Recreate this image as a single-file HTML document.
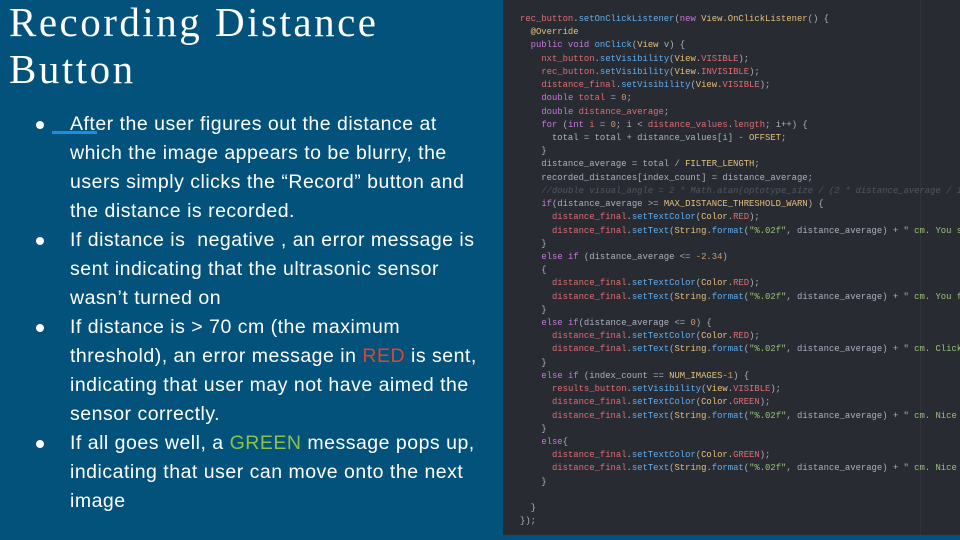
<!DOCTYPE html>
<html><head><meta charset="utf-8"><style>
*{margin:0;padding:0;box-sizing:border-box}
body{width:960px;height:540px;background:#03527b;position:relative;overflow:hidden;font-family:"Liberation Sans",sans-serif;color:#fff}
h1{position:absolute;left:9px;top:-1px;font-family:"Liberation Serif",serif;font-weight:normal;font-size:41px;line-height:47px;letter-spacing:2.5px;width:420px}
ul{position:absolute;left:70px;top:110px;width:416px;list-style:none;font-size:19.5px;line-height:29px;letter-spacing:0.5px}
li{position:relative}
li:before{content:"";position:absolute;left:-34px;top:11px;width:8px;height:8px;border-radius:50%;background:#fff}
.red{color:#e0442c}.green{color:#8bc34a}
.ul{position:absolute;left:52px;top:131px;width:45px;height:3px;background:#1a8fe0}
.code{position:absolute;left:503px;top:0;width:457px;height:535px;background:#282b32}
.vl{position:absolute;left:920px;top:0;width:1px;height:535px;background:#31343b}
pre{position:absolute;left:520px;top:13px;font-family:"Liberation Mono",monospace;font-size:8.9px;line-height:13.22px;color:#abb2bf;white-space:pre}
.r{color:#e06c75}.b{color:#61afef}.k{color:#c678dd}.y{color:#e5c07b}.n{color:#d19a66}.s{color:#98c379}.c{color:#4f5562;font-style:italic}
</style></head><body>
<h1>Recording Distance Button</h1>
<div class="ul"></div>
<ul>
<li>After the user figures out the distance at which the image appears to be blurry, the users simply clicks the “Record” button and the distance is recorded.</li>
<li>If distance is &nbsp;negative , an error message is sent indicating that the ultrasonic sensor wasn’t turned on</li>
<li>If distance is &gt; 70 cm (the maximum threshold), an error message in <span class="red">RED</span> is sent, indicating that user may not have aimed the sensor correctly.</li>
<li>If all goes well, a <span class="green">GREEN</span> message pops up, indicating that user can move onto the next image</li>
</ul>
<div class="code"></div><div class="vl"></div>
<pre><span class="r">rec_button</span>.<span class="b">setOnClickListener</span>(<span class="k">new</span> <span class="y">View</span>.<span class="y">OnClickListener</span>() {
  <span class="y">@Override</span>
  <span class="k">public void</span> <span class="b">onClick</span>(<span class="y">View</span> v) {
    <span class="r">nxt_button</span>.<span class="b">setVisibility</span>(<span class="y">View</span>.<span class="r">VISIBLE</span>);
    <span class="r">rec_button</span>.<span class="b">setVisibility</span>(<span class="y">View</span>.<span class="r">INVISIBLE</span>);
    <span class="r">distance_final</span>.<span class="b">setVisibility</span>(<span class="y">View</span>.<span class="r">VISIBLE</span>);
    <span class="k">double</span> <span class="r">total</span> = <span class="n">0</span>;
    <span class="k">double</span> <span class="r">distance_average</span>;
    <span class="k">for</span> (<span class="k">int</span> <span class="r">i</span> = <span class="n">0</span>; i &lt; <span class="r">distance_values</span>.<span class="r">length</span>; i++) {
      total = total + distance_values[i] - <span class="y">OFFSET</span>;
    }
    distance_average = total / <span class="y">FILTER_LENGTH</span>;
    recorded_distances[index_count] = distance_average;
    <span class="c">//double visual_angle = 2 * Math.atan(optotype_size / (2 * distance_average / 1</span>
    <span class="k">if</span>(distance_average &gt;= <span class="y">MAX_DISTANCE_THRESHOLD_WARN</span>) {
      <span class="r">distance_final</span>.<span class="b">setTextColor</span>(<span class="y">Color</span>.<span class="r">RED</span>);
      <span class="r">distance_final</span>.<span class="b">setText</span>(<span class="y">String</span>.<span class="b">format</span>(<span class="s">"%.02f"</span>, distance_average) + <span class="s">" cm. You s</span>
    }
    <span class="k">else if</span> (distance_average &lt;= <span class="n">-2.34</span>)
    {
      <span class="r">distance_final</span>.<span class="b">setTextColor</span>(<span class="y">Color</span>.<span class="r">RED</span>);
      <span class="r">distance_final</span>.<span class="b">setText</span>(<span class="y">String</span>.<span class="b">format</span>(<span class="s">"%.02f"</span>, distance_average) + <span class="s">" cm. You f</span>
    }
    <span class="k">else if</span>(distance_average &lt;= <span class="n">0</span>) {
      <span class="r">distance_final</span>.<span class="b">setTextColor</span>(<span class="y">Color</span>.<span class="r">RED</span>);
      <span class="r">distance_final</span>.<span class="b">setText</span>(<span class="y">String</span>.<span class="b">format</span>(<span class="s">"%.02f"</span>, distance_average) + <span class="s">" cm. Click</span>
    }
    <span class="k">else if</span> (index_count == <span class="y">NUM_IMAGES</span>-<span class="n">1</span>) {
      <span class="r">results_button</span>.<span class="b">setVisibility</span>(<span class="y">View</span>.<span class="r">VISIBLE</span>);
      <span class="r">distance_final</span>.<span class="b">setTextColor</span>(<span class="y">Color</span>.<span class="r">GREEN</span>);
      <span class="r">distance_final</span>.<span class="b">setText</span>(<span class="y">String</span>.<span class="b">format</span>(<span class="s">"%.02f"</span>, distance_average) + <span class="s">" cm. Nice</span>
    }
    <span class="k">else</span>{
      <span class="r">distance_final</span>.<span class="b">setTextColor</span>(<span class="y">Color</span>.<span class="r">GREEN</span>);
      <span class="r">distance_final</span>.<span class="b">setText</span>(<span class="y">String</span>.<span class="b">format</span>(<span class="s">"%.02f"</span>, distance_average) + <span class="s">" cm. Nice</span>
    }

  }
});</pre>
</body></html>
